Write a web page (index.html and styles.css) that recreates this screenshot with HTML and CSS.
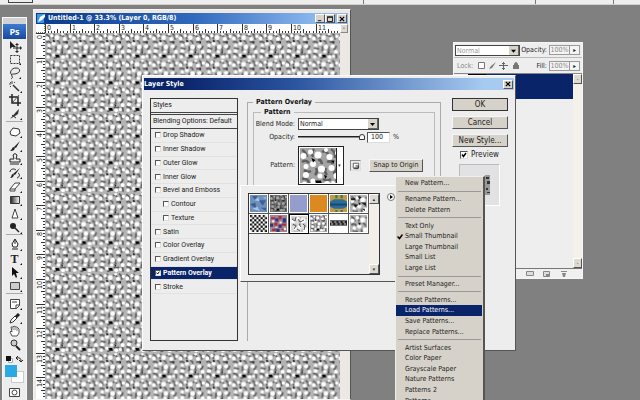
FILE: index.html
```html
<!DOCTYPE html>
<html lang="en">
<head>
<meta charset="utf-8">
<title>Layer Style</title>
<link rel="stylesheet" href="styles.css">
</head>
<body>
<svg class="defs" aria-hidden="true">
  <defs>
    <filter id="blob" x="-0.1" y="-0.1" width="1.2" height="1.2"><feGaussianBlur stdDeviation="1.3"/></filter>
    <g id="cell" filter="url(#blob)">
      <path stroke="#5e5e5e" stroke-width="5" fill="none" d="M4 4q8 4 10 14M28 2q-6 8-2 16M44 8q8-4 12 4M62 2q10 6 8 18M4 28q8-6 14 2M36 24q6-2 8 8M54 28q8-4 12 4M52 40q-4 8 2 14M74 38q-2 10-8 12M8 44q6 6 14 2M32 40q4 8-2 14M4 62q12-2 14 8M46 62q8 6 16 0M72 62q4 8 2 14M28 78q2-6 8-4"/>
      <g fill="#fff"><circle cx="7" cy="16" r="6"/><circle cx="21" cy="8" r="5"/><circle cx="36" cy="14" r="7"/><circle cx="59" cy="18" r="6"/><circle cx="75" cy="10" r="5"/><circle cx="12" cy="37" r="5"/><circle cx="26" cy="32" r="6"/><circle cx="43" cy="42" r="7"/><circle cx="63" cy="40" r="6"/><circle cx="73" cy="56" r="6"/><circle cx="12" cy="54" r="6"/><circle cx="40" cy="56" r="5"/><circle cx="26" cy="66" r="5"/><circle cx="54" cy="72" r="6"/><circle cx="9" cy="72" r="5"/><circle cx="66" cy="70" r="4"/><circle cx="52" cy="4" r="4"/></g>
      <path fill="#000" d="M30 65h12l2 8h-10zM23 20l8 4-5 5zM62 25h7l-2 6zM48 54l6 2-3 6z"/>
    </g>
    <pattern id="stone" width="80" height="80" patternUnits="userSpaceOnUse" patternTransform="scale(.3333)"><rect width="80" height="80" fill="#b4b4b4"/><use href="#cell"/></pattern>
    <pattern id="stone-big" width="80" height="80" patternUnits="userSpaceOnUse" patternTransform="scale(.5)"><rect width="80" height="80" fill="#a4a4a4"/><use href="#cell"/></pattern>
    <pattern id="stone-tiny" width="80" height="80" patternUnits="userSpaceOnUse" patternTransform="scale(.2)"><rect width="80" height="80" fill="#aaa"/><use href="#cell"/></pattern>
    <pattern id="checks" width="4" height="4" patternUnits="userSpaceOnUse"><rect width="4" height="4" fill="#fff"/><path fill="#111" d="M0 0h2v2H0zM2 2h2v2H2z"/></pattern>
  </defs>
</svg>

<header class="optionbar"><span class="tool-box"></span><span class="divider first"></span><span class="divider"></span><span class="divider last"></span></header>

<aside class="toolbox">
  <div class="grip"></div>
  <div class="ps">Ps</div>
  <div class="tools">
    <button aria-label="Move"><svg viewBox="0 0 14 14"><path fill="#222" d="M2 2v8l2-2 4 0z"/><path stroke="#222" fill="none" d="M9 5v8M5 9h8"/><path fill="#222" d="M9 4l2 2H7zM9 14l2-2H7zM14 9l-2 2V7z"/></svg></button>
    <button aria-label="Marquee"><svg viewBox="0 0 14 14"><path stroke="#333" fill="none" stroke-dasharray="2 1" d="M2.500 3.500h9v8h-9z"/><path fill="#111" d="M13 11v2h-2z"/></svg></button>
    <button aria-label="Lasso"><svg viewBox="0 0 14 14"><path stroke="#333" fill="none" d="M4 9C1 7 3 2 8 2s5 5-1 6c-3 0-4 0-3 2s0 2-1 3"/><path fill="#111" d="M13 11v2h-2z"/></svg></button>
    <button aria-label="Magic wand"><svg viewBox="0 0 14 14"><path stroke="#333" stroke-width="1.500" d="M5 5l6 6"/><path stroke="#444" d="M4 1v3M1 4h2M2 2l1 1M6 3l1-1M3 6L2 7"/><path fill="#111" d="M14 11v2h-2z"/></svg></button>
    <button aria-label="Crop"><svg viewBox="0 0 14 14"><path stroke="#222" stroke-width="1.500" fill="none" d="M4 1v9h9M1 4h9v9"/><path stroke="#555" d="M5 9l6-7"/></svg></button>
    <button aria-label="Slice"><svg viewBox="0 0 14 14"><path fill="#333" d="M2 12L8 5l3-3-1 5-3 2z"/><path stroke="#333" d="M4 8l4 3"/><path fill="#111" d="M14 11v2h-2z"/></svg></button>
    <hr>
    <button aria-label="Healing brush"><svg viewBox="0 0 14 14"><path fill="#fff" stroke="#333" d="M2 7l3-4 6 1 1 4-4 3-5-1z"/><path fill="#111" d="M14 11v2h-2z"/></svg></button>
    <button aria-label="Brush"><svg viewBox="0 0 14 14"><path fill="#222" d="M12 2L8 9 6 8zM7 9c-1 3-3 3-5 3 2-1 2-4 4-4z"/><path fill="#111" d="M14 11v2h-2z"/></svg></button>
    <button aria-label="Clone stamp"><svg viewBox="0 0 14 14"><path fill="#eee" stroke="#222" d="M5 3q2-3 4 0L8 7h4v3H2V7h4zM2 12h9"/><path fill="#111" d="M14 11v2h-2z"/></svg></button>
    <button aria-label="History brush"><svg viewBox="0 0 14 14"><path fill="#222" d="M12 2L7 9 5 8zM6 9c-1 3-3 3-4 3 2-1 1-4 3-4z"/><path fill="none" stroke="#222" d="M2 6c0-3 4-4 6-2M9 12c3-1 3-4 1-5"/><path fill="#111" d="M14 11v2h-2z"/></svg></button>
    <button aria-label="Eraser"><svg viewBox="0 0 14 14"><path fill="#fff" stroke="#444" d="M2 9l5-6h5l-5 6v2H2zM2 9h5"/><path fill="#111" d="M14 11v2h-2z"/></svg></button>
    <button aria-label="Gradient"><svg viewBox="0 0 14 14"><defs><linearGradient id="gr"><stop stop-color="#222"/><stop offset="1" stop-color="#fff"/></linearGradient></defs><path fill="url(#gr)" stroke="#333" d="M2.500 3.500h9v7h-9z"/><path fill="#111" d="M14 11v2h-2z"/></svg></button>
    <button aria-label="Blur"><svg viewBox="0 0 14 14"><path fill="#fff" stroke="#444" d="M7 2l3 9H4z"/><path fill="#111" d="M14 11v2h-2z"/></svg></button>
    <button aria-label="Dodge"><svg viewBox="0 0 14 14"><circle cx="5" cy="5" r="3" fill="#222"/><path stroke="#222" stroke-width="1.500" d="M7 7l4 4"/><path fill="#111" d="M14 11v2h-2z"/></svg></button>
    <hr>
    <button aria-label="Pen"><svg viewBox="0 0 14 14"><path fill="#fff" stroke="#222" d="M7 1L4 6l1 3h4l1-3zM7 2v4M4 11h6"/><path fill="#111" d="M14 11v2h-2z"/></svg></button>
    <button class="type" aria-label="Type">T<svg viewBox="0 0 14 14"><path fill="#111" d="M14 11v2h-2z"/></svg></button>
    <button aria-label="Path selection"><svg viewBox="0 0 14 14"><path fill="#111" d="M4 1v9l2-2 2 4 1-1-1-4h3z"/><path fill="#111" d="M14 11v2h-2z"/></svg></button>
    <button aria-label="Rectangle"><svg viewBox="0 0 14 14"><path fill="#ccc" stroke="#444" d="M2.500 3.500h9v7h-9z"/><path fill="#111" d="M14 11v2h-2z"/></svg></button>
    <hr>
    <button aria-label="Notes"><svg viewBox="0 0 14 14"><path fill="#fff" stroke="#444" d="M2.500 2.500h9v6l-3 3h-6zM8 12V8h4M4 5h5"/><path fill="#111" d="M14 11v2h-2z"/></svg></button>
    <button aria-label="Eyedropper"><svg viewBox="0 0 14 14"><path fill="#fff" stroke="#333" d="M2 12l1-3 4-4 2 2-4 4z"/><path stroke="#222" stroke-width="3" d="M8 6l3-3"/><path fill="#111" d="M14 11v2h-2z"/></svg></button>
    <button aria-label="Hand"><svg viewBox="0 0 14 14"><path fill="#fff" stroke="#555" d="M4 12L2 8l1-1 1 1-1-5 2 0 1-1 2 1 1 0 1 1 1 1v4l-2 3z"/><path stroke="#777" d="M5 3v3M7 3v3M9 4v3"/></svg></button>
    <button aria-label="Zoom"><svg viewBox="0 0 14 14"><circle cx="6" cy="5" r="3" fill="#ccc" stroke="#333"/><path stroke="#222" stroke-width="2" d="M8 8l4 4"/></svg></button>
  </div>
  <svg class="mini" viewBox="0 0 20 8"><path fill="#fff" stroke="#aaa" d="M4.500 3.500h4v4h-4z"/><path fill="#111" d="M2 1h5v5H2z"/><path fill="none" stroke="#222" d="M13 3q4-1 4 3M14 1l-2 2 2 2M15 5l2 2 2-2"/></svg>
  <div class="colors"><span class="back"></span><span class="fore"></span></div>
  <svg class="mask" viewBox="0 0 14 10"><path fill="#fff" stroke="#444" d="M2.500.5h10v8h-10z"/><circle cx="7.500" cy="4.500" r="2.500" fill="#fff" stroke="#444"/></svg>
</aside>

<section class="doc">
  <div class="titlebar">
    <svg class="feather" viewBox="0 0 9 9"><path fill="#3c96e8" d="M0 0h7v9H0z"/><path fill="#fff" d="M8 0L3 3 1 8l4-2 3-3z"/></svg>
    <h1>Untitled-1 @ 33.3% (Layer 0, RGB/8)</h1>
    <button class="winbtn" aria-label="Minimize"><svg viewBox="0 0 7 7"><path fill="#000" d="M1 5h4v1H1z"/></svg></button>
    <button class="winbtn" aria-label="Maximize"><svg viewBox="0 0 7 7"><path fill="none" stroke="#000" d="M.5 1.500h6v5h-6zM0 1h7"/></svg></button>
    <button class="winbtn close" aria-label="Close"><svg viewBox="0 0 7 7"><path stroke="#000" stroke-width="1.500" d="M1 1l5 5M6 1L1 6"/></svg></button>
  </div>
  <div class="docgrid">
    <div class="corner"></div>
    <svg class="ruler-x" id="ruler-x"></svg>
    <div class="scroll-end">-</div>
    <svg class="ruler-y" id="ruler-y"></svg>
    <svg class="canvas"><rect width="100%" height="100%" fill="url(#stone)"/></svg>
  </div>
</section>

<section class="layers">
  <div class="lrow">
    <select class="mode" aria-label="Layer blend mode" disabled><option>Normal</option></select>
    <label for="lop">Opacity:</label><input id="lop" value="100%" disabled><span class="spin">▸</span>
  </div>
  <div class="lrow second">
    <span class="dim">Lock:</span>
    <svg class="locks" viewBox="0 0 42 9"><path fill="#fff" stroke="#777" d="M1.500 1.500h6v6h-6z"/><path fill="#777" d="M19 1l-4 6-3 1 2-3zM37 4V3q2-4 4 0v1h1v4h-6V4z"/><path stroke="#666" d="M26.500 1v8M22 4.500h9M25 2.500h3M25 7.500h3"/></svg>
    <label for="lfill">Fill:</label><input id="lfill" value="100%" disabled><span class="spin">▸</span>
  </div>
  <div class="lbody"><div class="llist"><div class="lsel"><span></span></div></div><div class="lscroll"><i>-</i><i>-</i></div></div>
  <div class="lfoot"><svg viewBox="0 0 70 9"><path fill="#ddd" stroke="#888" d="M14.500 2.500h7v4h-7zM31.500 2.500h6v5h-6z"/><path fill="#888" d="M49 2h6v1h-6zM50 4h4l-1 4h-2zM34 5h3v3h-3zM0 4h4v1H0z"/></svg></div>
</section>

<section class="dialog">
  <div class="titlebar">
    <h2>Layer Style</h2>
    <button class="winbtn" aria-label="Close"><svg viewBox="0 0 7 7"><path stroke="#000" stroke-width="1.500" d="M1 1l5 5M6 1L1 6"/></svg></button>
  </div>
  <div class="dbody">
    <div class="styles">
      <div class="shead">Styles</div>
      <div class="shead blend">Blending Options: Default</div>
      <div class="srows">
        <label><input type="checkbox">Drop Shadow</label>
        <label><input type="checkbox">Inner Shadow</label>
        <label><input type="checkbox">Outer Glow</label>
        <label><input type="checkbox">Inner Glow</label>
        <label><input type="checkbox">Bevel and Emboss</label>
        <label class="sub"><input type="checkbox">Contour</label>
        <label class="sub"><input type="checkbox">Texture</label>
        <label><input type="checkbox">Satin</label>
        <label><input type="checkbox">Color Overlay</label>
        <label><input type="checkbox">Gradient Overlay</label>
        <label class="on"><input type="checkbox" checked>Pattern Overlay</label>
        <label><input type="checkbox">Stroke</label>
      </div>
    </div>
    <fieldset class="outer">
      <legend>Pattern Overlay</legend>
      <fieldset class="inner">
        <legend>Pattern</legend>
        <div class="form">
          <label for="bm">Blend Mode:</label>
          <select id="bm" class="mode"><option>Normal</option></select>
          <label for="op">Opacity:</label>
          <div class="opline"><input type="range" id="op" value="100"><input class="num" value="100" aria-label="Opacity percent"><span>%</span></div>
          <span class="lab">Pattern:</span>
          <div class="patline">
            <button class="swatch" aria-label="Pattern picker"><svg><rect width="100%" height="100%" fill="url(#stone-big)"/></svg><i>▾</i></button>
            <button class="new" aria-label="New preset"><svg viewBox="0 0 10 10"><path fill="#fff" stroke="#555" d="M2.500 2.500h6v5h-6z"/><path fill="none" stroke="#222" d="M5 5.500h3v3H3"/></svg></button>
            <button class="push snap">Snap to Origin</button>
          </div>
        </div>
      </fieldset>
    </fieldset>
    <div class="actions">
      <button class="push ok">OK</button>
      <button class="push">Cancel</button>
      <button class="push">New Style...</button>
      <label><input type="checkbox" checked>Preview</label>
      <div class="thumb"><svg viewBox="0 0 5 20"><rect width="5" height="20" fill="#999"/><path fill="#333" d="M1 2h3v2H1zM2 6h3v3H2zM1 13h2v2H1zM2 17h3v1H2z"/></svg></div>
    </div>
  </div>
</section>

<section class="picker">
  <div class="pbox">
    <div class="pgrid">
      <svg viewBox="0 0 16 16"><path fill="#6d8fbd" d="M0 0h16v16H0z"/><path fill="#3f5f91" d="M2 1h5l-2 4zM8 5h7l-3 5zM0 9l5-2 1 6zM10 12h5v3z"/><path fill="#a9c3e0" d="M4 5l4-3 1 4zM2 13l5-2 2 4zM12 2h3v2z"/></svg>
      <svg viewBox="0 0 16 16"><path fill="url(#stone-tiny)" d="M0 0h16v16H0z"/><path fill="#0005" d="M0 0h16v16H0z"/></svg>
      <svg viewBox="0 0 16 16"><path fill="#949dcb" d="M0 0h16v16H0z"/></svg>
      <svg viewBox="0 0 16 16"><path fill="#dc8a20" d="M0 0h16v16H0z"/></svg>
      <svg viewBox="0 0 16 16"><path fill="#c19a42" d="M0 0h16v16H0z"/><path fill="#2c6c9c" d="M0 6l4-2h8l4 2v5l-4 2H4l-4-2z"/><path fill="#184a73" d="M0 8h16v2H0z"/><path fill="#357a55" d="M5 0h2v3H5zM10 0h2v3h-2zM5 14h2v2H5zM10 14h2v2h-2z"/></svg>
      <svg viewBox="0 0 16 16"><path fill="url(#stone)" d="M0 0h16v16H0z"/><path fill="#222" d="M1 3h4v2H1zM7 1l4 1-2 2zM10 7h5v3zM3 9h5l-3 3zM11 13h3v2z"/></svg>
      <svg viewBox="0 0 16 16"><path fill="url(#checks)" d="M0 0h16v16H0z"/></svg>
      <svg viewBox="0 0 16 16"><path fill="#9d8897" d="M0 0h16v16H0z"/><path fill="#bf2638" d="M1 2h4v2H1zM8 1h3v3H8zM4 7h3v3H4zM11 8h4v2h-4zM2 13h4v2H2zM10 13h3v2z"/><path fill="#2d3979" d="M5 3h3v3H5zM12 3h3v4h-3zM0 8h3v3H0zM8 9h3v3H8zM6 13h3v3H6z"/><path fill="#eee" d="M2 5h2v2H2zM9 6h2v2H9zM5 11h2v1H5zM13 12h2v2h-2z"/></svg>
      <svg class="picked" viewBox="0 0 16 16"><path fill="url(#stone)" d="M0 0h16v16H0z"/><path fill="#fff8" d="M0 0h16v16H0z"/><path stroke="#555" fill="none" d="M1 3l3 2 1-4M7 3l2 3 4-2M2 8l3 2-2 3M8 8l2 3M12 8l2 2-1 4M6 13l3 2"/></svg>
      <svg viewBox="0 0 16 16"><path fill="url(#stone-tiny)" d="M0 0h16v16H0z"/></svg>
      <svg viewBox="0 0 16 16"><path fill="#fff" d="M0 0h16v16H0z"/><path fill="#222" d="M0 5h16v5H0z"/><path stroke="#ddd" stroke-dasharray="2 2" d="M0 6.500h16M1 8.500h15"/></svg>
      <svg viewBox="0 0 16 16"><path fill="url(#stone)" d="M0 0h16v16H0z"/></svg>
    </div>
    <div class="pscroll"><i>▴</i><i>▾</i></div>
  </div>
  <button class="flyout" aria-label="Pattern menu"><svg viewBox="0 0 8 8"><circle cx="4" cy="4" r="3.500" fill="#fff" stroke="#777"/><path fill="#000" d="M3 2l3 2-3 2z"/></svg></button>
</section>

<nav class="menu">
  <button>New Pattern...</button><hr>
  <button>Rename Pattern...</button><button>Delete Pattern</button><hr>
  <button>Text Only</button><button class="ticked"><svg viewBox="0 0 6 6"><path fill="none" stroke="#000" stroke-width="1.500" d="M.5 2.500l2 2 3-4"/></svg>Small Thumbnail</button><button>Large Thumbnail</button><button>Small List</button><button>Large List</button><hr>
  <button>Preset Manager...</button><hr>
  <button>Reset Patterns...</button><button class="hot">Load Patterns...</button><button>Save Patterns...</button><button>Replace Patterns...</button><hr>
  <button>Artist Surfaces</button><button>Color Paper</button><button>Grayscale Paper</button><button>Nature Patterns</button><button>Patterns 2</button><button>Patterns</button>
</nav>
<script src="rulers.js"></script>
</body>
</html>
```
FILE: styles.css
```css
* { box-sizing: border-box; }
body {
  margin: 0;
  height: 100vh;
  overflow: hidden;
  position: relative;
  background: #808080;
  color: #222;
  font: 7px/10px "DejaVu Sans Condensed", "DejaVu Sans", sans-serif;
}
button, input, select { font: inherit; color: inherit; margin: 0; padding: 0; border: 0; border-radius: 0; background: none; appearance: none; }
h1, h2, hr, fieldset, legend { margin: 0; padding: 0; border: 0; font: inherit; }
i { font-style: normal; }
svg { display: block; }
.defs { position: absolute; width: 0; height: 0; }

.optionbar { height: 5px; display: flex; background: #eee; border-bottom: 1px solid #d4d0c8; padding-left: 8px; }
.tool-box { width: 25px; height: 3px; border: 1px solid #444; border-top: 0; }
.divider { width: 1px; height: 4px; background: #777; margin-left: auto; }
.divider.first { margin-left: 330px; }
.divider.last { margin: 0 26px 0 77px; }

.toolbox { position: absolute; left: 2px; top: 17px; bottom: 0; width: 25px; display: flex; flex-direction: column; background: #ededed; border: 1px solid #f8f8f8; border-bottom: 0; }
.grip { height: 6px; background: #d2d2d2; }
.ps { height: 15px; flex: none; background: linear-gradient(#3c7cd0, #1a49a0); color: #fff; font: bold 9px/15px "Open Sans", sans-serif; text-align: center; }
.tools { height: 313px; flex: none; display: flex; flex-direction: column; }
.tools button { flex: 138 1 0; min-height: 0; position: relative; display: flex; justify-content: center; align-items: center; }
.tools hr { flex: 32 1 0; border-top: 1px solid #aaa; margin: 0 3px; min-height: 0; }
.tools svg { width: 14px; height: 14px; }
.tools .type { font: bold 12px/14px "Liberation Serif", serif; }
.type svg { position: absolute; left: 5px; top: 0; }
.mini { width: 20px; height: 8px; margin: 3px 0 2px 1px; flex: none; }
.colors { height: 20px; flex: none; display: grid; grid-template-columns: 6px 6px 7px; grid-template-rows: 6px 6px 6px; margin-left: 2px; }
.back { grid-area: 2 / 2 / 4 / 4; background: #fff; border: 1px solid #ccc; }
.fore { grid-area: 1 / 1 / 3 / 3; background: #2aa9e4; }
.mask { width: 14px; height: 10px; margin: 3px 0 0 4px; flex: none; }

.titlebar { display: flex; align-items: center; background: linear-gradient(90deg, #0a246a 10%, #2a53a0 40%, #a6caf0 92%); color: #fff; font-weight: bold; }
.titlebar h1, .titlebar h2 { flex: 1; white-space: nowrap; font-size: 7px; line-height: 11px; }
.winbtn { width: 10px; height: 9px; background: #d8d4cc; border: 1px solid #fff; border-right-color: #555; border-bottom-color: #555; display: flex; align-items: center; justify-content: center; }
.winbtn svg { width: 6px; height: 6px; }
.winbtn.close { margin: 0 1px 0 2px; }

.doc { position: absolute; left: 33px; top: 9px; bottom: 0; width: 318px; padding: 3px 2px 0 2px; background: #ece9e4; border: 1px solid #f4f4f4; border-right-color: #555; display: flex; flex-direction: column; }
.doc .titlebar { height: 11px; flex: none; background: linear-gradient(90deg, #0a3a8a, #2f68bd 50%, #8cb8ee 90%); }
.feather { width: 9px; height: 9px; margin: 0 2px 0 1px; }
.docgrid { flex: 1; display: grid; grid-template: 9px 1fr / 9px 295px 1fr; min-height: 0; }
.corner { background: #fff; border: dotted #777; border-width: 0 1px 1px 0; }
.ruler-x { width: 100%; height: 9px; background: #fff; }
.ruler-y { width: 9px; height: 100%; background: #fff; }
.canvas { width: 100%; height: 100%; }
.scroll-end { border: 1px solid #fff; border-right-color: #888; border-bottom-color: #888; background: #ddd9d0; line-height: 6px; text-align: center; }
.doc text { font: 7px "DejaVu Sans Condensed", sans-serif; fill: #222; }
.doc line { stroke: #333; }

.layers { position: absolute; left: 453px; top: 42px; width: 130px; height: 237px; display: flex; flex-direction: column; background: #eee; border: 1px solid #f6f6f6; }
.lrow { height: 15px; flex: none; display: flex; align-items: center; border-bottom: 1px solid #bbb; padding: 0 2px 0 1px; white-space: nowrap; }
.lrow label { margin-left: auto; margin-right: 2px; }
.lrow input { width: 21px; height: 10px; background: #f4f4f4; border: 1px solid #999; color: #888; text-align: center; }
.spin { width: 10px; height: 10px; border: 1px solid #999; border-left: 0; background: #f4f4f4; font-size: 6px; line-height: 7px; text-align: center; }
.mode { height: 12px; padding-left: 1px; border: 1px solid #444; line-height: 10px; background: #fff url('data:image/svg+xml,<svg xmlns="http://www.w3.org/2000/svg" viewBox="0 0 10 10"><path fill="%23666" d="M0 0h10v10H0z"/><path fill="%23d8d4cc" d="M0 0h9v9H0z"/><path fill="%23000" d="M2 4h5L4.500 7z"/></svg>') right / 10px 10px no-repeat; }
.lrow .mode { width: 65px; height: 11px; color: #999; opacity: 1; }
.lrow.second { height: 16px; border-bottom: 1px solid #888; }
.dim { color: #888; margin: 0 4px 0 2px; }
.locks { width: 42px; height: 9px; }
.lbody { flex: 1; display: flex; min-height: 0; }
.llist { flex: 1; background: #eee; padding-left: 14px; }
.lsel { height: 25px; background: #0a246a; }
.lsel span { display: block; width: 18px; height: 10px; background: #ddd; border: 1px solid #000; }
.lscroll { width: 9px; background: #f3f1e9; display: flex; flex-direction: column; justify-content: space-between; }
.lscroll i, .pscroll i { height: 10px; background: #dedad2; border: 1px solid #fff; border-right-color: #555; border-bottom-color: #555; font-size: 5px; line-height: 8px; text-align: center; }
.lfoot { height: 10px; border-top: 1px solid #777; display: flex; justify-content: flex-end; background: #f0f0f0; }
.lfoot svg { width: 70px; height: 9px; }

.dialog { position: absolute; left: 142px; top: 75px; width: 374px; height: 276px; background: #ededed; border: 1px solid #fff; border-right-color: #555; border-bottom-color: #555; display: flex; flex-direction: column; padding: 2px 1px; }
.dialog .titlebar { height: 12px; flex: none; padding-right: 1px; }
.dbody { flex: 1; display: flex; padding: 8px 5px 7px 6px; }
.styles { width: 88px; border: 1px solid #333; font-family: Roboto, sans-serif; }
.shead { height: 14px; line-height: 13px; padding-left: 2px; border-bottom: 1px solid #444; white-space: nowrap; }
.shead.blend { height: 15px; border-top: 1px solid #444; line-height: 13px; margin-top: 1px; }
.srows { height: 165px; display: grid; grid-template-rows: repeat(12, 1fr); }
.srows label { display: flex; align-items: center; gap: 2px; padding-left: 4px; border-bottom: 1px solid #e2e2e2; min-height: 0; white-space: nowrap; }
.srows .sub { padding-left: 12px; }
.srows .on { background: #0a246a; color: #fff; font-weight: bold; }
input[type=checkbox] { width: 6px; height: 6px; border: 1px solid #555; border-right-color: #ddd; border-bottom-color: #ddd; background: #fff; }
input[type=checkbox]:checked { background: #fff url('data:image/svg+xml,<svg xmlns="http://www.w3.org/2000/svg" viewBox="0 0 6 6"><path fill="none" stroke="%23000" stroke-width="1.500" d="M1 2.500l1.500 2L5 1"/></svg>') center / 100% no-repeat; }
.outer { width: 194px; margin-left: 9px; border: 1px solid #aaa; border-bottom: 0; padding: 0 5px; }
.dbody .outer { margin-top: -1px; }
.outer legend, .inner legend { font-weight: bold; padding: 0 3px; height: 10px; color: #111; }
.inner { border: 1px solid #bbb; border-bottom: 0; height: 90px; }
.outer .inner legend { margin-left: 7px; }
.form { display: grid; grid-template-columns: 41px 1fr; grid-template-rows: 13px 12px 42px; column-gap: 3px; row-gap: 1px; align-items: center; }
.form > label, .form > .lab { text-align: right; white-space: nowrap; }
.form .mode { width: 81px; }
.opline { display: flex; align-items: center; }
.opline input[type=range] { width: 67px; height: 8px; }
input[type=range]::-webkit-slider-runnable-track { height: 2px; background: #888; border-top: 1px solid #222; }
input[type=range]::-webkit-slider-thumb { appearance: none; width: 6px; height: 6px; margin-top: -3px; background: #fff; border: 1px solid #333; border-radius: 3px 3px 0 0; }
.num { width: 23px; height: 11px; background: #fff; border: 1px solid #555; border-right-color: #ddd; border-bottom-color: #ddd; margin: 0 3px 0 2px; padding-left: 3px; }
.patline { display: flex; align-items: center; }
.swatch { width: 46px; height: 39px; border: 1px solid #222; display: flex; background: #fff; padding: 1px; }
.swatch svg { width: 36px; height: 35px; }
.swatch i { flex: 1; border-left: 1px solid #222; font-size: 5px; line-height: 35px; }
.new { width: 11px; height: 11px; margin: 0 8px 0 6px; border: 1px solid #ddd; border-top-color: #888; border-left-color: #888; }
.new svg { width: 9px; height: 9px; }
.push { height: 13px; background: #d6d2ca; border: 1px solid #f6f6f6; border-right-color: #555; border-bottom-color: #555; text-align: center; white-space: nowrap; line-height: 10px; }
.snap { width: 54px; }
.actions { width: 56px; margin-left: 11px; display: flex; flex-direction: column; gap: 5px; font-size: 8px; }
.actions label { display: flex; align-items: center; gap: 3px; padding-left: 8px; height: 8px; margin-top: -1px; }
.actions .ok { border: 1px solid #333; }
.actions input { width: 8px; height: 8px; }
.thumb { width: 41px; height: 42px; margin-left: 7px; border: 1px solid #bbb; border-right-color: #fff; border-bottom-color: #fff; background: #e2e2e4; padding: 10px 0 0 25px; }
.thumb svg { width: 5px; height: 20px; }

.picker { position: absolute; left: 240px; top: 185px; width: 180px; height: 97px; background: #ededed; border: 1px solid #fff; border-bottom-color: #555; padding: 7px; display: flex; align-items: flex-start; gap: 7px; }
.pbox { width: 132px; height: 82px; border: 1px solid #333; display: flex; justify-content: space-between; align-items: flex-start; }
.pgrid { display: grid; grid-template-columns: repeat(6, 20px); grid-auto-rows: 20px; }
.pgrid svg { width: 20px; height: 20px; border: solid #555; border-width: 0 1px 1px 0; padding: 1px; background: #fff; }
.pgrid .picked { border: 1px solid #000; }
.pscroll { width: 10px; height: 80px; display: flex; flex-direction: column; justify-content: space-between; background: #f1efe8; }
.flyout { width: 8px; height: 8px; }
.flyout svg { width: 8px; height: 8px; }

.menu { position: absolute; left: 395px; top: 176px; width: 90px; height: 232px; background: #d6d2ca; border: 1px solid #eee; border-right: 2px solid #555; display: flex; flex-direction: column; padding: 1px 0; }
.menu button { flex: 107 1 0; min-height: 0; line-height: 10px; text-align: left; padding-left: 9px; position: relative; white-space: nowrap; margin-right: 1px; }
.menu hr { flex: 53 1 0; min-height: 0; margin: 0 2px; background: linear-gradient(#999, #999) center / 100% 1px no-repeat; }
.menu .hot { background: #0a246a; color: #fff; }
.menu button svg { position: absolute; left: 1px; top: 3px; width: 6px; height: 6px; }
```
FILE: rulers.js
```javascript
// One ruler unit is 24.6 px at this zoom level.
const UNIT = 24.6;
const NS = "http://www.w3.org/2000/svg";

function add(parent, name, attrs, text) {
  const el = document.createElementNS(NS, name);
  for (const key in attrs) el.setAttribute(key, attrs[key]);
  if (text !== undefined) el.textContent = text;
  parent.appendChild(el);
}

function ruler(id, count, vertical) {
  const svg = document.getElementById(id);
  for (let i = 0; i < count * 8; i++) {
    const p = Math.round(i * UNIT / 8) + 0.5;
    const len = i % 8 === 0 ? 9 : i % 4 === 0 ? 4 : 2;
    add(svg, "line", vertical
      ? { x1: 9 - len, x2: 9, y1: p, y2: p }
      : { y1: 9 - len, y2: 9, x1: p, x2: p });
  }
  for (let n = 0; n < count; n++) {
    const p = Math.round(n * UNIT) + 2;
    if (vertical) {
      // Side ruler labels read bottom to top.
      const end = p + (n > 9 ? 8 : 4);
      add(svg, "text", { transform: `translate(6 ${end}) rotate(-90)` }, n);
    } else {
      add(svg, "text", { x: p, y: 6 }, n);
    }
  }
}

ruler("ruler-x", 12, false);
ruler("ruler-y", 15, true);
```
